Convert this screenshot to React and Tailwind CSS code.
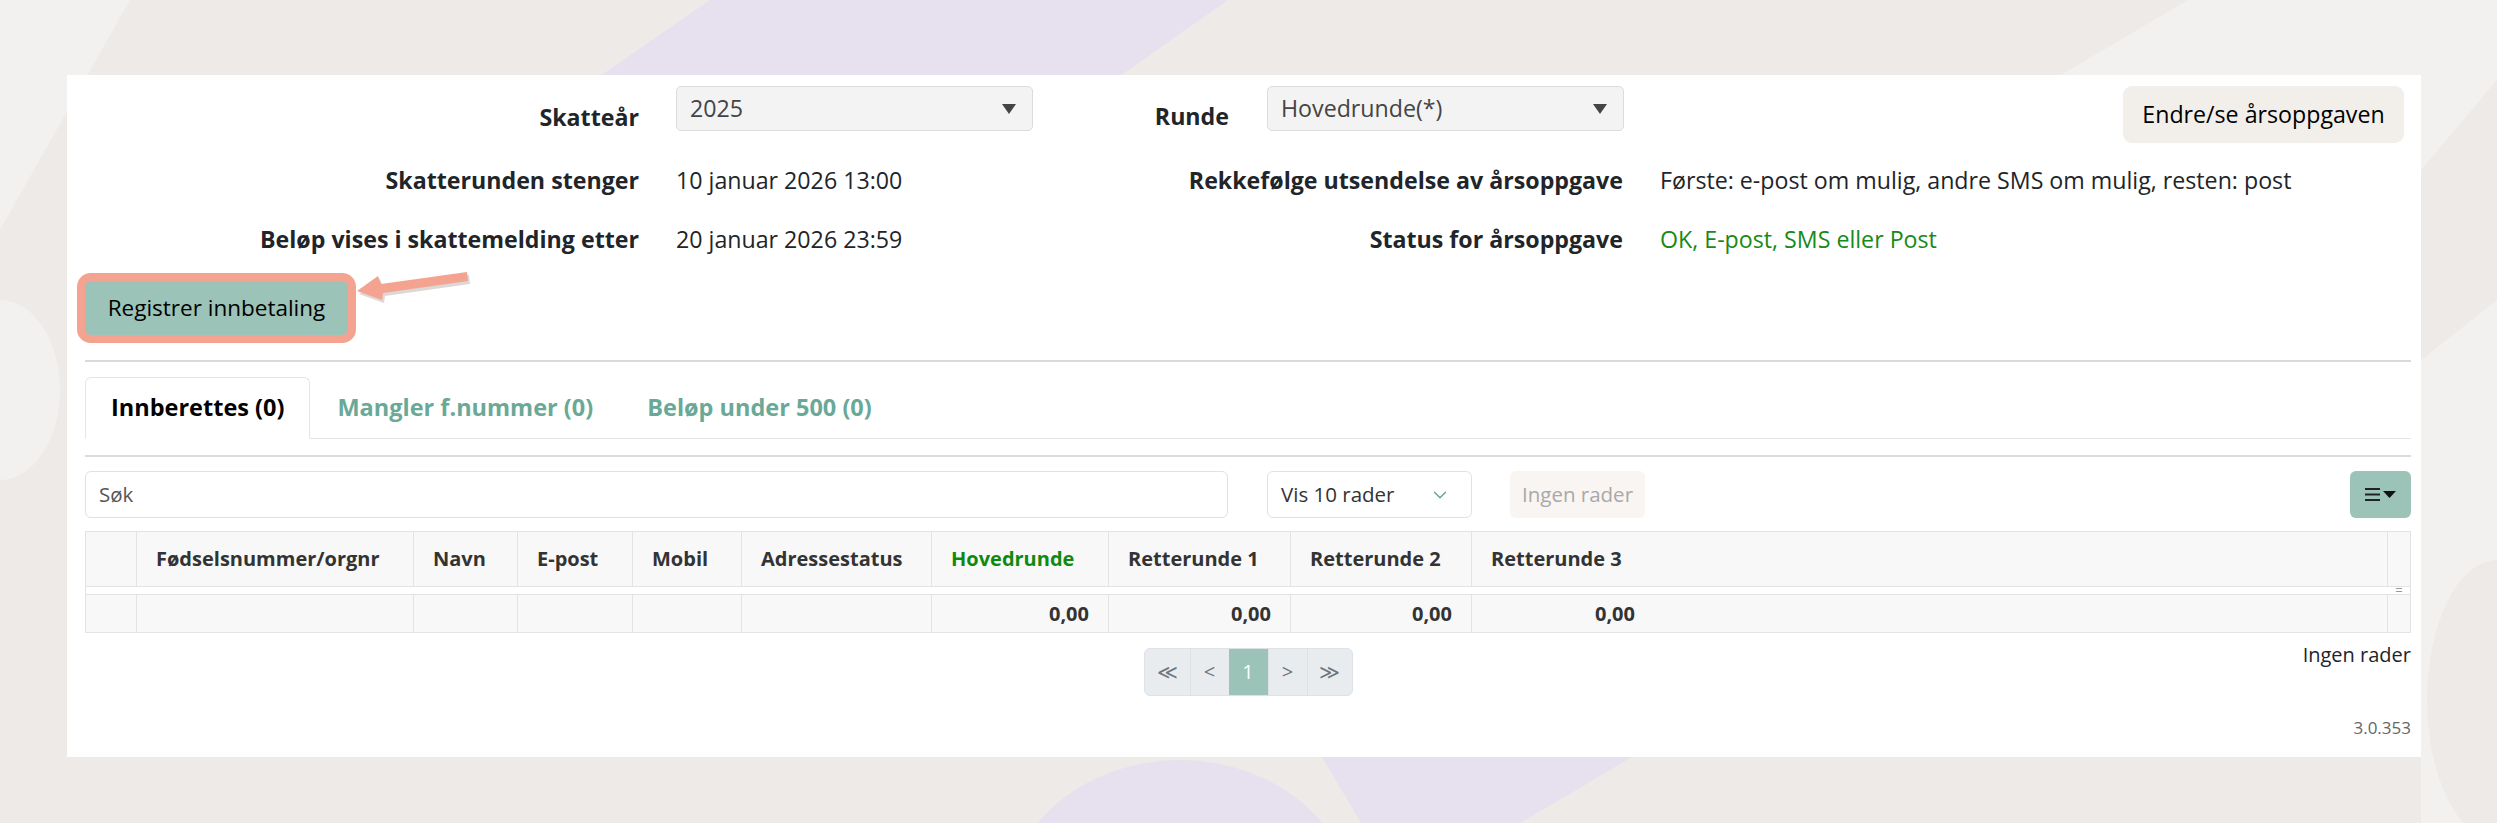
import { ChevronDown } from "lucide-react";

function Backdrop() {
  return (
    <svg className="absolute inset-0" width="2497" height="823" viewBox="0 0 2497 823">
      <rect width="2497" height="823" fill="#eeeae7" />
      <polygon points="0,0 130,0 0,230" fill="#f3f0f0" />
      <polygon points="710,0 1228,0 1100,90 580,90" fill="#e7e0ee" />
      <polygon points="2188,0 2497,0 2497,823 2421,823 2421,75 2061,75" fill="#f3f0f0" />
      <polygon points="2497,80 2497,300 2421,360 2421,170" fill="#eeeae7" />
      <ellipse cx="2497" cy="700" rx="70" ry="140" fill="#eeeae7" />
      <ellipse cx="0" cy="390" rx="60" ry="90" fill="#f3f0f0" />
      <polygon points="1322,757 1632,757 1520,823 1361,823" fill="#e7e0ee" />
      <ellipse cx="1180" cy="910" rx="175" ry="150" fill="#e7e0ee" />
    </svg>
  );
}

function Select({ value }) {
  return (
    <div className="flex h-[45px] w-[357px] items-center justify-between rounded-[5px] border border-[#dcdcdc] bg-[#f3f3f3] pl-[13px] pr-[16px] text-[#444]">
      <span>{value}</span>
      <svg width="14" height="10" viewBox="0 0 14 10">
        <polygon points="0,0 14,0 7,10" fill="#444" />
      </svg>
    </div>
  );
}

const cols = [
  { w: "w-[51px]", label: "" },
  { w: "w-[277px]", label: "Fødselsnummer/orgnr" },
  { w: "w-[104px]", label: "Navn" },
  { w: "w-[115px]", label: "E-post" },
  { w: "w-[109px]", label: "Mobil" },
  { w: "w-[190px]", label: "Adressestatus" },
  { w: "w-[177px]", label: "Hovedrunde", green: true, sum: true },
  { w: "w-[182px]", label: "Retterunde 1", sum: true },
  { w: "w-[181px]", label: "Retterunde 2", sum: true },
  { w: "w-[182px]", label: "Retterunde 3", sum: true, last: true },
];

export default function App() {
  return (
    <div className="relative h-[823px] w-[2497px] overflow-hidden bg-[#eeeae7] font-['Open_Sans',sans-serif] text-[23.2px] text-[#212529]">
      <Backdrop />
      <div className="relative pl-[67px] pt-[75px]">
        <div className="relative h-[682px] w-[2354px] bg-white pl-[18px] pr-[10px] pt-[11px]">
          {/* header info */}
          <div className="grid grid-cols-[554px_357px_553px_1fr] grid-rows-[57px_44px_44px] gap-x-[37px] gap-y-[15px]">
            <div className="self-center pt-[5px] text-right font-bold">Skatteår</div>
            <div className="self-start">
              <Select value="2025" />
            </div>
            <div className="flex items-start justify-end gap-[38px]">
              <div className="pt-[13px] font-bold">Runde</div>
              <div className="w-[356px]">
                <Select value="Hovedrunde(*)" />
              </div>
            </div>
            <div className="flex justify-end pr-[7px]">
              <button className="h-[57px] w-[281px] rounded-[9px] bg-[#f2eee9] text-black">Endre/se årsoppgaven</button>
            </div>

            <div className="self-center text-right font-bold">Skatterunden stenger</div>
            <div className="self-center whitespace-nowrap">10 januar 2026 13:00</div>
            <div className="self-center text-right font-bold">Rekkefølge utsendelse av årsoppgave</div>
            <div className="self-center whitespace-nowrap">Første: e-post om mulig, andre SMS om mulig, resten: post</div>

            <div className="self-center text-right font-bold">Beløp vises i skattemelding etter</div>
            <div className="self-center whitespace-nowrap">20 januar 2026 23:59</div>
            <div className="self-center text-right font-bold">Status for årsoppgave</div>
            <div className="self-center text-[#178a17]">OK, E-post, SMS eller Post</div>
          </div>

          <button className="mt-[20px] h-[54px] w-[263px] rounded-[6px] bg-[#9cc3b8] text-[22.5px] text-black shadow-[0_0_0_8px_#f4a391]">
            Registrer innbetaling
          </button>

          {/* annotation arrow */}
          <svg className="absolute left-[278px] top-[185px]" width="135" height="50" viewBox="0 0 135 50">
            <polygon points="14,34 35,19 38,27 124,15 125,24 40,36 39,43" fill="#9a8f8a" opacity="0.35" />
            <polygon points="12,31 33,16 36,24 122,12 123,21 38,33 37,40" fill="#f4a391" />
          </svg>

          <div className="mt-[25px] h-[2px] bg-[#d9d9d9]" />

          {/* tabs */}
          <div className="mt-[15px] flex h-[62px] border-b border-[#e1e4e8] text-[23.5px] font-bold">
            <div className="-mb-px flex items-center rounded-t-[6px] border border-[#e1e4e8] border-b-white bg-white px-[25px] text-black">
              Innberettes (0)
            </div>
            <div className="flex items-center px-[27px] text-[#6aa897]">Mangler f.nummer (0)</div>
            <div className="flex items-center px-[27px] text-[#6aa897]">Beløp under 500 (0)</div>
          </div>
          <div className="mt-[16px] h-[2px] bg-[#dcdcdc]" />

          {/* toolbar */}
          <div className="mt-[14px] flex h-[47px] items-stretch text-[20.5px]">
            <div className="flex w-[1143px] items-center rounded-[6px] border border-[#dee2e6] px-[13px] text-[#555]">Søk</div>
            <div className="ml-[39px] flex w-[205px] items-center justify-between rounded-[6px] border border-[#dee2e6] pl-[13px] pr-[20px] text-[#333]">
              <span>Vis 10 rader</span>
              <ChevronDown size={22} strokeWidth={1.4} color="#5f9f8e" />
            </div>
            <div className="ml-[38px] flex w-[135px] items-center justify-center rounded-[6px] bg-[#f8f5f2] text-[#a9a9a9]">Ingen rader</div>
            <div className="flex-1" />
            <div className="flex w-[61px] items-center justify-center rounded-[6px] bg-[#9cc3b8]">
              <svg width="32" height="14" viewBox="0 0 32 14">
                <rect x="0" y="0" width="15" height="2" fill="#222" />
                <rect x="0" y="5.5" width="15" height="2" fill="#222" />
                <rect x="0" y="11" width="15" height="2" fill="#222" />
                <polygon points="18,3 31,3 24.5,10" fill="#111" />
              </svg>
            </div>
          </div>

          {/* table */}
          <div className="mt-[13px] border border-[#e3e3e3] text-[20px] font-bold text-[#333]">
            <div className="flex h-[55px] border-b border-[#e3e3e3] bg-[#f8f8f8]">
              {cols.map((c, i) => (
                <div
                  key={i}
                  className={`${c.w} flex shrink-0 items-center px-[19px] ${c.last ? "" : "border-r border-[#e3e3e3]"} ${c.green ? "text-[#0f8a0f]" : ""}`}
                >
                  {c.label}
                </div>
              ))}
              <div className="flex-1 border-r border-[#e3e3e3]" />
              <div className="w-[22px]" />
            </div>
            <div className="flex h-[7px] items-center justify-end bg-white">
              <div className="w-[22px] text-center text-[13px] font-normal leading-none text-[#999]">=</div>
            </div>
            <div className="flex h-[38px] border-t border-[#e3e3e3] bg-[#f8f8f8]">
              {cols.map((c, i) => (
                <div
                  key={i}
                  className={`${c.w} flex shrink-0 items-center justify-end px-[19px] ${c.last ? "" : "border-r border-[#e3e3e3]"}`}
                >
                  {c.sum ? "0,00" : ""}
                </div>
              ))}
              <div className="flex-1 border-r border-[#e3e3e3]" />
              <div className="w-[22px]" />
            </div>
          </div>

          {/* pager */}
          <div className="mt-[15px] grid grid-cols-[1fr_auto_1fr] text-[20px]">
            <div />
            <div className="flex h-[48px] overflow-hidden rounded-[6px] border border-[#dee2e6] bg-[#e9ecef] text-[#6c757d]">
              <div className="flex w-[45px] items-center justify-center">≪</div>
              <div className="flex w-[39px] items-center justify-center border-l border-[#dee2e6]">&lt;</div>
              <div className="flex w-[39px] items-center justify-center bg-[#9cc3b8] text-white">1</div>
              <div className="flex w-[39px] items-center justify-center border-l border-[#dee2e6]">&gt;</div>
              <div className="flex w-[45px] items-center justify-center border-l border-[#dee2e6]">≫</div>
            </div>
            <div className="-mt-[7px] text-right leading-[28px] text-[#212529]">Ingen rader</div>
          </div>

          <div className="mt-[20px] text-right text-[17px] leading-[24px] text-[#666]">3.0.353</div>
        </div>
      </div>
    </div>
  );
}
